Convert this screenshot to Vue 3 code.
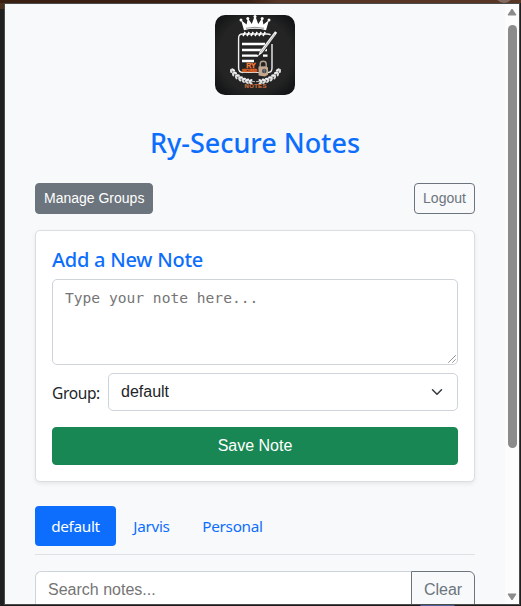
<script setup>
import { ref } from 'vue'

const groups = ['default', 'Jarvis', 'Personal']
const active = ref('default')
const note = ref('')
const search = ref('')
const leaves = [
  [17.5, 56, 60], [19.5, 59, 50], [22.5, 61.8, 40], [25.8, 63.8, 28], [29.2, 65.2, 18], [32.7, 66.2, 8], [36.2, 66.7, 0],
]
</script>

<template>
  <div class="desktop">
    <div class="backdrop-tab"></div>
    <div class="popup">
      <main class="content">
        <svg class="logo" viewBox="0 0 80 80">
          <defs>
            <radialGradient id="tile" cx="50%" cy="50%" r="70%">
              <stop offset="0.65" stop-color="#242424" />
              <stop offset="1" stop-color="#0c0f10" />
            </radialGradient>
          </defs>
          <rect width="80" height="80" rx="10" fill="url(#tile)" />
          <g fill="#fff">
            <path d="M29 15.2 26 5l5.6 4.5L32.8 3l4 6L40 0l3.2 9 4-6 1.2 6.5L54 5l-3 10.2Q40 12.4 29 15.2Z" />
            <circle cx="26" cy="5" r="1.5" /><circle cx="32.8" cy="3.4" r="1.5" />
            <circle cx="40" cy="1.6" r="1.5" /><circle cx="47.2" cy="3.4" r="1.5" />
            <circle cx="54" cy="5" r="1.5" />
          </g>
          <path d="M31 13.3Q40 11.2 49 13.3" stroke="#242424" stroke-width=".5" fill="none" />
          <path d="M57 29V53q0 4.5-4 4.5M28 57.5q-4.4 0-4.4-4.5V23q0-4 4-4H52q2.5 0 3.6 1" fill="none" stroke="#eee" stroke-width="1.4" />
          <path d="M28 57.5H47" stroke="#ddd" stroke-width="1" />
          <path d="m28 21 2.2-4m1.8 4 2.2-4m1.8 4 2.2-4m1.8 4 2.2-4m1.8 4 2.2-4m1.8 4 2.2-4" stroke="#fff" stroke-width="1.6" />
          <path d="M27 29H50M27 35H52M27 40.7H43M48 40.7h4.5M27 46H39" stroke="#fff" stroke-width="2.3" />
          <path d="M61.5 17.5 46.2 37.5l-2.6 3.3" stroke="#242424" stroke-width="4" />
          <path d="m60 16.2 2.2 1.6L47.2 38l-4.2 3.3 1.9-5Z" fill="#f3f3f3" />
          <path d="m60 19-14.5 19" stroke="#555" stroke-width=".4" />
          <text class="logo-ry" x="31.2" y="53" textLength="9.6" lengthAdjust="spacingAndGlyphs">RY</text>
          <text class="logo-sub" x="27" y="57" textLength="15" lengthAdjust="spacingAndGlyphs">SECURED</text>
          <path d="M45.2 52v-3q0-2.7 3-2.7t3 2.7v3" fill="none" stroke="#b6a18b" stroke-width="1.4" />
          <path d="m43.5 51.6 7.5-.3 2 1.2v7.3l-3 1.8-6.4-1Z" fill="#c4a78c" />
          <circle cx="49.3" cy="56" r="2.3" fill="#444b55" />
          <path d="M49.3 54v4M48.2 55.2h2.3" stroke="#7d8791" stroke-width=".6" />
          <g v-for="side in 2" :key="side" :transform="side === 2 ? 'translate(81 0) scale(-1 1)' : ''">
            <path d="M16.5 54.5Q22 66 40 66.7" stroke="#ddd" stroke-width=".8" fill="none" />
            <g v-for="leaf in leaves" :key="leaf[0]" :transform="`translate(${leaf[0]} ${leaf[1]}) rotate(${leaf[2]})`">
              <ellipse cx="0" cy="-1.4" rx="2.2" ry="1.1" transform="rotate(-28)" fill="#eee" />
              <ellipse cx="0" cy="1.4" rx="2.2" ry="1.1" transform="rotate(28)" fill="#ddd" />
            </g>
          </g>
          <text class="logo-notes" x="29.6" y="73" textLength="21.8">NOTES</text>
        </svg>

        <h1 class="title">Ry-Secure Notes</h1>

        <div class="actions">
          <button class="btn small filled">Manage Groups</button>
          <button class="btn small outline">Logout</button>
        </div>

        <section class="card">
          <h2 class="card-title">Add a New Note</h2>
          <div class="note-wrap">
            <textarea v-model="note" class="note" placeholder="Type your note here..."></textarea>
            <svg class="grip" viewBox="0 0 8 8"><path d="M.5 7.5l7-7M4.5 7.5l3-3" stroke="#444" stroke-width=".9" stroke-dasharray="1.1 .4" /></svg>
          </div>
          <div class="group-row">
            <span class="group-label">Group:</span>
            <div class="select">
              <span>{{ active }}</span>
              <svg class="chevron" viewBox="0 0 16 16"><path d="m2 5 6 6 6-6" fill="none" stroke="#343a40" stroke-width="2" stroke-linecap="round" stroke-linejoin="round" /></svg>
            </div>
          </div>
          <button class="btn save">Save Note</button>
        </section>

        <nav class="tabs">
          <button v-for="g in groups" :key="g" class="tab" :class="[g.toLowerCase(), { active: g === active }]" @click="active = g">{{ g }}</button>
        </nav>

        <div class="search-row">
          <input v-model="search" class="search" placeholder="Search notes..." />
          <button class="btn clear">Clear</button>
        </div>
      </main>
      <aside class="scrollbar">
        <svg class="arrow" viewBox="0 0 10 8"><path d="M5 1 9 7H1Z" fill="#8b8b8b" stroke="#8b8b8b" stroke-linejoin="round" /></svg>
        <div class="track"><div class="thumb"></div></div>
        <svg class="arrow" viewBox="0 0 10 8"><path d="M5 7 9 1H1Z" fill="#8b8b8b" stroke="#8b8b8b" stroke-linejoin="round" /></svg>
      </aside>
    </div>
  </div>
</template>

<style>
body { margin: 0; overflow: hidden; }
</style>

<style scoped>
* { box-sizing: border-box; }
.desktop {
  position: relative;
  width: 521px;
  height: 606px;
  padding: 3px 1px 1px 4px;
  overflow: hidden;
  background: linear-gradient(90deg, #3a2012 0 250px, #583626 280px) 0 0 / 100% 3px no-repeat,
    linear-gradient(#4b3020, #4b3020) 0 3px / 4px 6px no-repeat,
    linear-gradient(90deg, #1d1a1b 0 420px, #4c5f9b 421px 454px, #1d1a1b 455px) 0 100% / 100% 1px no-repeat,
    #202020;
}
.backdrop-tab { position: absolute; left: 495px; top: -15px; width: 18px; height: 18px; border-radius: 50%; background: #846b60; }
.popup {
  position: relative;
  display: flex;
  width: 516px;
  height: 602px;
  border: 1px solid #4b4b4b;
  background: #f8f9fb;
  overflow: hidden;
}
.content { display: flex; flex-direction: column; width: 500px; padding: 11px 30px 0; flex: none; }
.content > * { flex: none; }
.logo { width: 80px; height: 80px; align-self: center; }
.logo-ry { font: 900 7px "Liberation Sans", sans-serif; fill: #f97b35; stroke: #f97b35; stroke-width: .3px; }
.logo-sub { font: 700 3px "Liberation Sans", sans-serif; fill: #ed6a26; stroke: #ed6a26; stroke-width: .3px; }
.logo-notes { font: 700 6px "Liberation Sans", sans-serif; fill: #c96c3e; stroke: #c96c3e; stroke-width: .15px; }
.title {
  margin: 31px 0 0;
  height: 34px;
  text-align: center;
  font: 500 27px/34px "Noto Sans", sans-serif;
  letter-spacing: -0.02px;
  color: #0d6efd;
  white-space: nowrap;
}
.actions { display: flex; justify-content: space-between; margin-top: 23px; }
.btn { padding: 0; border: 1px solid; border-radius: 6px; font: 16px/24px "Liberation Sans", sans-serif; }
.small { height: 31px; padding: 0 8px; font-size: 14px; line-height: 21px; border-radius: 4px; }
.filled { width: 118px; background: #6c757d; border-color: #6c757d; color: #fff; white-space: nowrap; }
.outline { width: 61px; background: transparent; border-color: #6c757d; color: #6c757d; }
.card {
  height: 252px;
  margin-top: 16px;
  padding: 17px 16px 16px;
  border: 1px solid #dcdddf;
  border-radius: 5px;
  background: #fff;
  box-shadow: 0 2px 4px rgba(0, 0, 0, .075);
}
.card-title { margin: 0 0 7px; font: 500 20px/24px "Noto Sans", sans-serif; color: #0d6efd; letter-spacing: -0.25px; }
.note-wrap { position: relative; height: 86px; }
.note {
  display: block;
  width: 100%;
  height: 86px;
  padding: 6px 12px;
  border: 1px solid #ced4da;
  border-radius: 5px;
  resize: none;
  font: 14.6px/24px "DejaVu Sans Mono", monospace;
  color: #212529;
}
.note::placeholder, .search::placeholder { color: #757575; opacity: 1; }
.grip { position: absolute; right: 2px; bottom: 2px; width: 8px; height: 8px; }
.group-row { display: flex; align-items: center; justify-content: space-between; height: 38px; margin-top: 8px; }
.group-label { padding-top: 1px; font: 15.5px/24px "Noto Sans", sans-serif; color: #212529; letter-spacing: -0.35px; }
.select {
  display: flex;
  align-items: center;
  justify-content: space-between;
  width: 350px;
  height: 38px;
  padding: 0 13px 0 12px;
  border: 1px solid #ced4da;
  border-radius: 5px;
  font: 16px/24px "Liberation Sans", sans-serif;
  color: #212529;
}
.chevron { width: 14px; height: 12px; }
.save { display: block; width: 100%; height: 38px; margin-top: 16px; background: #198754; border-color: #198754; color: #fff; border-radius: 4px; }
.tabs { display: flex; height: 49px; margin-top: 24px; border-bottom: 1px solid #dee2e6; }
.tab { width: 71px; height: 40px; padding: 0; border: 0; border-radius: 4px; background: none; color: #0d6efd; font: 15.3px/40px "Noto Sans", sans-serif; letter-spacing: -0.3px; }
.tab.default { width: 81px; }
.tab.personal { width: 91px; }
.tab.active { background: #0d6efd; color: #fff; }
.search-row { display: flex; margin-top: 16px; height: 38px; }
.search { width: 376px; padding: 0 12px; border: 1px solid #ced4da; border-right: 0; border-radius: 6px 0 0 6px; font: 16px/24px "Liberation Sans", sans-serif; color: #212529; }
.clear { width: 64px; background: transparent; border-color: #6c757d; color: #6c757d; border-radius: 0 6px 6px 0; }
.scrollbar { display: flex; flex-direction: column; align-items: center; width: 15px; padding: 4px 0 3px; background: #fcfcfc; }
.arrow { width: 10px; height: 8px; flex: none; }
.track { flex: 1; padding-top: 9px; }
.thumb { width: 9px; height: 423px; border-radius: 5px; background: #8b8b8b; }
</style>
